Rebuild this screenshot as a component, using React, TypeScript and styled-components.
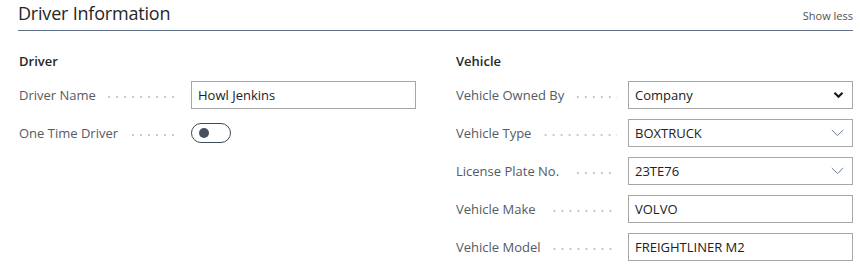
import React from "react";
import styled, { createGlobalStyle } from "styled-components";

const Global = createGlobalStyle`
  html, body { margin: 0; padding: 0; background: #fff; }
  body { font-family: "Open Sans", "Noto Sans", sans-serif; color: #212121; }
  * { box-sizing: border-box; }
`;

const Page = styled.div`
  padding: 0 7px 0 18px;
  width: 860px;
`;

const Header = styled.div`
  display: flex;
  align-items: flex-end;
  justify-content: space-between;
  height: 31px;
  border-bottom: 1px solid #5f6f86;
  padding-bottom: 5px;
`;

const Title = styled.h2`
  margin: 0;
  font-size: 18px;
  font-weight: 400;
  color: #262626;
  line-height: 24px;
  letter-spacing: -0.2px;
`;

const ShowLess = styled.span`
  font-size: 11px;
  color: #505050;
  line-height: 16px;
  margin-bottom: 1px;
`;

const Columns = styled.div`
  display: grid;
  grid-template-columns: 397px 397px;
  column-gap: 40px;
  padding-left: 1px;
  padding-top: 20px;
`;

const Group = styled.div`
  display: flex;
  flex-direction: column;
`;

const GroupTitle = styled.div`
  font-size: 13px;
  font-weight: 600;
  color: #262626;
  height: 20px;
  line-height: 20px;
  margin-bottom: 10px;
`;

const Row = styled.div`
  display: grid;
  grid-template-columns: 172px 225px;
  height: 28px;
  margin-bottom: 10px;
  align-items: center;
`;

const Label = styled.div`
  display: flex;
  align-items: center;
  font-size: 13px;
  color: #555a63;
  overflow: hidden;
  white-space: nowrap;
  padding-right: 11px;
  &::after {
    content: "";
    flex: 1;
    margin-left: 12px;
    margin-top: 3px;
    height: 2px;
    background-image: linear-gradient(to right, #c9c9c9 2px, transparent 2px);
    background-size: 8px 2px;
    background-repeat: repeat-x;
    background-position: right center;
  }
`;

const Box = styled.div`
  height: 28px;
  border: 1px solid #a6a6a6;
  display: flex;
  align-items: center;
  padding: 0 8px 0 6px;
  font-size: 13px;
  color: #212121;
  background: #fff;
`;

const Value = styled.span`
  flex: 1;
`;

const Toggle = styled.div`
  width: 40px;
  height: 20px;
  border: 1px solid #3f4a5a;
  border-radius: 10px;
  display: flex;
  align-items: center;
  padding-left: 7px;
  &::before {
    content: "";
    width: 10px;
    height: 10px;
    border-radius: 50%;
    background: #46505f;
  }
`;

const Chevron = ({ bold }: { bold?: boolean }) =>
  bold ? (
    <svg width="11" height="8" viewBox="0 0 11 8">
      <path d="M1.5 1.8 L5.5 5.8 L9.5 1.8" fill="none" stroke="#1a1a1a" strokeWidth="2.2" />
    </svg>
  ) : (
    <svg width="13" height="8" viewBox="0 0 13 8">
      <path d="M0.8 1 L6.5 6.6 L12.2 1" fill="none" stroke="#6c7a92" strokeWidth="1" />
    </svg>
  );

type Field = { label: string; value?: string; kind?: "text" | "select" | "lookup" | "toggle" };

const driver: Field[] = [
  { label: "Driver Name", value: "Howl Jenkins" },
  { label: "One Time Driver", kind: "toggle" },
];

const vehicle: Field[] = [
  { label: "Vehicle Owned By", value: "Company", kind: "select" },
  { label: "Vehicle Type", value: "BOXTRUCK", kind: "lookup" },
  { label: "License Plate No.", value: "23TE76", kind: "lookup" },
  { label: "Vehicle Make", value: "VOLVO" },
  { label: "Vehicle Model", value: "FREIGHTLINER M2" },
];

const FieldRow = ({ f }: { f: Field }) => (
  <Row>
    <Label>{f.label}</Label>
    {f.kind === "toggle" ? (
      <Toggle />
    ) : (
      <Box>
        <Value>{f.value}</Value>
        {f.kind === "select" && <Chevron bold />}
        {f.kind === "lookup" && <Chevron />}
      </Box>
    )}
  </Row>
);

export default function App() {
  return (
    <Page>
      <Global />
      <Header>
        <Title>Driver Information</Title>
        <ShowLess>Show less</ShowLess>
      </Header>
      <Columns>
        <Group>
          <GroupTitle>Driver</GroupTitle>
          {driver.map((f) => (
            <FieldRow key={f.label} f={f} />
          ))}
        </Group>
        <Group>
          <GroupTitle>Vehicle</GroupTitle>
          {vehicle.map((f) => (
            <FieldRow key={f.label} f={f} />
          ))}
        </Group>
      </Columns>
    </Page>
  );
}
